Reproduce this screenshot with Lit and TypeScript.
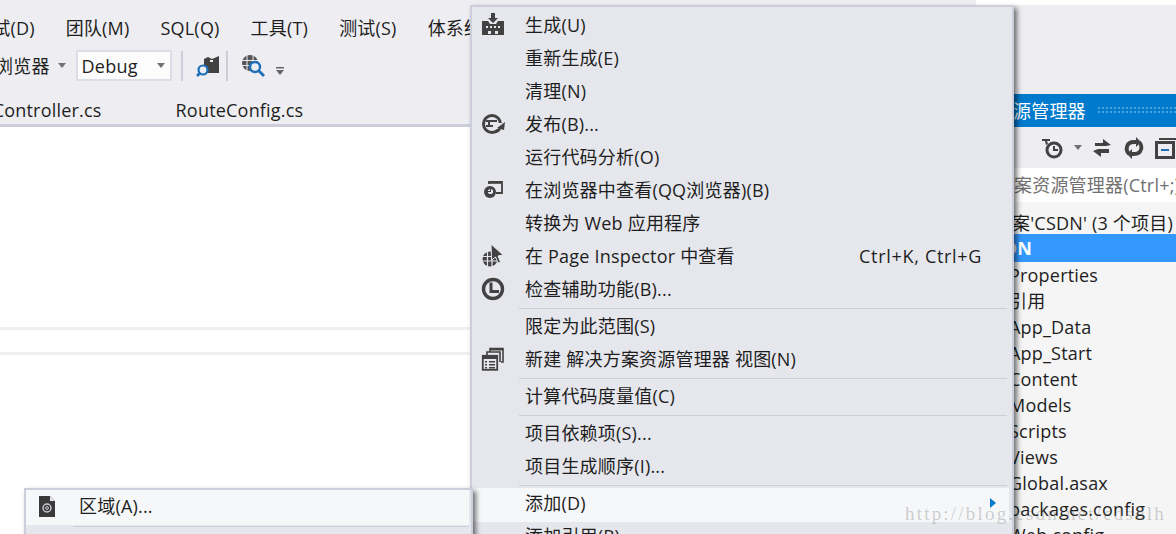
import { LitElement, html, css, svg } from "lit";
import { customElement } from "lit/decorators.js";

const G = "#424242";
const icons: Record<string, unknown> = {
  build: svg`<svg width="24" height="24" viewBox="0 0 24 24"><path fill="${G}" d="M10 0h4v5h3l-5 5-5-5h3z"/><path fill="${G}" d="M1 8h6l2 3h6l2-3h6v14H1z"/><path fill="#e6e7ed" d="M5 13h2v2H5zM9 13h2v2H9zM13 13h2v2h-2zM17 13h2v2h-2zM7 18h3v3H7zM14 18h3v3h-3z"/></svg>`,
  publish: svg`<svg width="24" height="24" viewBox="0 0 24 24"><circle cx="11" cy="12" r="8.5" fill="none" stroke="${G}" stroke-width="3"/><path fill="none" stroke="${G}" stroke-width="2" d="M5 9h11M5 14h7M8 9v5"/><path fill="#e6e7ed" d="M14 11h9v6h-9z"/><path fill="${G}" d="M24 10l-1 8-7-2z"/><path fill="none" stroke="${G}" stroke-width="2.4" d="M13 20c3 0 5-1 6-4"/></svg>`,
  browser: svg`<svg width="24" height="24" viewBox="0 0 24 24"><path fill="none" stroke="${G}" stroke-width="1.8" d="M8 6V4h13v11h-6"/><path fill="none" stroke="${G}" stroke-width="1.6" d="M8 5h12"/><circle cx="9" cy="14" r="6" fill="${G}"/><circle cx="9.5" cy="13.5" r="2.6" fill="#e6e7ed"/><path fill="${G}" d="M9 11h1v3H6v-1h3z"/></svg>`,
  inspector: svg`<svg width="24" height="24" viewBox="0 0 24 24"><circle cx="9" cy="15" r="7.5" fill="${G}"/><path fill="none" stroke="#e6e7ed" stroke-width="1.2" d="M1 12.5h15M1 17h15M6.5 7v16M11 7v16"/><path fill="${G}" stroke="#e6e7ed" stroke-width="1" d="M10 0l12 11-5 1 2.600 6-2.600 1-2.500-6-4 3z"/></svg>`,
  access: svg`<svg width="24" height="24" viewBox="0 0 24 24"><circle cx="12" cy="12" r="9.500" fill="none" stroke="${G}" stroke-width="3.400"/><path fill="none" stroke="${G}" stroke-width="3" d="M10 5.500v9h8"/></svg>`,
  newview: svg`<svg width="24" height="24" viewBox="0 0 24 24"><path fill="none" stroke="${G}" stroke-width="1.6" d="M9 5V1.5h13V15h-2"/><path fill="${G}" d="M9 1h13v2.500H9z"/><path fill="none" stroke="${G}" stroke-width="1.600" d="M6 8V5h13v10"/><rect x="1.800" y="8.800" width="14.400" height="14" fill="#e6e7ed" stroke="${G}" stroke-width="1.800"/><path fill="${G}" d="M2 9h14v3H2zM4 14h2v1.500H4zM8 14h6v1.500H8zM4 17h2v1.500H4zM8 17h6v1.500H8zM4 20h2v1.500H4zM8 20h6v1.500H8z"/></svg>`,
  area: svg`<svg width="20" height="24" viewBox="0 0 20 24"><path fill="#3a3a3a" d="M2 2h11l5 5v16H2z"/><path fill="#e6e7ed" d="M13 2l5 5h-5z"/><circle cx="10" cy="14" r="4" fill="none" stroke="#c9cbd2" stroke-width="1.400"/><circle cx="10" cy="14" r="1.400" fill="none" stroke="#c9cbd2" stroke-width="1"/></svg>`,
};

const rows: Array<[string, string?, string?]> = [
  ["生成(U)", "build"],
  ["重新生成(E)"],
  ["清理(N)"],
  ["发布(B)...", "publish"],
  ["运行代码分析(O)"],
  ["在浏览器中查看(QQ浏览器)(B)", "browser"],
  ["转换为 Web 应用程序"],
  ["在 Page Inspector 中查看", "inspector", "Ctrl+K, Ctrl+G"],
  ["检查辅助功能(B)...", "access"],
  ["-"],
  ["限定为此范围(S)"],
  ["新建 解决方案资源管理器 视图(N)", "newview"],
  ["-"],
  ["计算代码度量值(C)"],
  ["-"],
  ["项目依赖项(S)..."],
  ["项目生成顺序(I)..."],
  ["-"],
  ["添加(D)", undefined, ">"],
  ["添加引用(R)..."],
];

const tree = ["Properties", "引用", "App_Data", "App_Start", "Content", "Models", "Scripts", "Views", "Global.asax", "packages.config", "Web.config"];

@customElement("app-root")
export class AppRoot extends LitElement {
  static styles = css`
    :host {
      display: block;
      position: relative;
      width: 1176px;
      height: 534px;
      overflow: hidden;
      background: #eeeef2;
      color: #1e1e1e;
      font: 18px/26px "Open Sans", "Noto Sans CJK SC", sans-serif;
      letter-spacing: 0.2px;
    }
    .page { display: flex; height: 534px; }
    .main { width: 900px; flex: none; display: flex; flex-direction: column; overflow: hidden; }
    .menubar { display: flex; gap: 31px; height: 50px; flex: none; padding-top: 15px; box-sizing: border-box; margin-left: -26px; white-space: nowrap; }
    .toolbar { display: flex; align-items: center; height: 31px; flex: none; margin-left: -5px; white-space: nowrap; }
    .arrow { width: 0; height: 0; border: 4.5px solid transparent; border-top: 5px solid #717171; border-bottom: 0; }
    .arrow-a { margin-left: 8px; }
    .arrow-b { margin-left: 9px; }
    .combo { width: 96px; height: 31px; box-sizing: border-box; margin-left: 10px; border: 2px solid #dcdde6; background: #fcfcfc; display: flex; align-items: center; justify-content: space-between; padding: 0 5px 0 4px; }
    .tbsep { width: 2px; height: 30px; background: #ccced9; }
    .sep-a { margin-left: 9px; }
    .sep-b { margin-left: 6px; }
    .t-find { margin-left: 13px; }
    .t-globe { margin-left: 12px; }
    .t-over { margin: 10px 0 0 9px; }
    .tabs { display: flex; height: 46px; flex: none; box-sizing: border-box; padding: 17px 0 0 0; margin-left: -59px; gap: 74px; white-space: nowrap; border-bottom: 3px solid #cccedb; }
    .tabs span { line-height: 24px; }
    .editor { flex: 1; background: #fff; display: flex; flex-direction: column; }
    .strip { height: 3px; background: #efefef; }
    .gap-a { height: 200px; }
    .gap-b { height: 22px; }
    .panel { flex: 1; min-width: 0; display: flex; flex-direction: column; overflow: hidden; }
    .panel > * { flex: none; }
    .topwhite { height: 5px; margin-left: 76px; background: #fff; }
    .topgap { height: 89px; }
    .title { height: 33px; background: #007acc; color: #fff; display: flex; align-items: center; padding-left: 22px; white-space: nowrap; }
    .dots { width: 100px; height: 9px; margin-left: 11px; flex: none; background-image: radial-gradient(#4aa3df 0.8px, transparent 1px); background-size: 4px 4px; }
    .ptools { height: 41px; display: flex; align-items: center; white-space: nowrap; }
    .ptools .tbsep { margin-left: 125px; }
    .p-clock { margin-left: 16px; }
    .p-swap { margin-left: 9px; }
    .p-sync { margin-left: 10px; }
    .p-win { margin-left: 10px; }
    .search { height: 34px; background: #fff; color: #717171; display: flex; align-items: center; padding-left: 114px; white-space: nowrap; }
    .tree { background: #f5f5f5; white-space: nowrap; display: flex; flex-direction: column; height: 332px; }
    .sol { height: 32px; flex: none; box-sizing: border-box; padding: 8px 0 0 112px; line-height: 26px; }
    .sel { height: 28px; flex: none; background: #3399ff; color: #fff; font-weight: 700; line-height: 28px; padding-left: 82px; }
    .node { height: 26px; flex: none; line-height: 26px; padding-left: 109px; }
    .menu { position: absolute; left: 470px; top: 5px; width: 544px; height: 560px; box-sizing: border-box; border: 2px solid #cccedb; background: #e6e7ed; box-shadow: 3px 3px 5px rgba(0,0,0,.55); padding-top: 3px; }
    .row { display: grid; grid-template-columns: 53px 334px 1fr; align-items: center; height: 33px; box-sizing: border-box; padding-bottom: 3px; white-space: nowrap; margin-right: 3px; }
    .row.hot { background: #f6f7f9; height: 34px; padding-bottom: 5px; margin-left: 1px; grid-template-columns: 52px 334px 1fr; margin-bottom: -1px; }
    .key { letter-spacing: 0.7px; }
    .ico { display: flex; justify-content: flex-start; padding-left: 9px; align-items: center; height: 24px; }
    .sep { height: 4px; margin: 0 5px 0 47px; display: flex; align-items: flex-start; padding-top: 1px; box-sizing: border-box; }
    .sep::before { content: ""; display: block; width: 100%; height: 1px; background: #cccedb; }
    .tri { justify-self: end; margin-right: 13px; width: 0; height: 0; border: 5px solid transparent; border-left: 6px solid #007acc; border-right: 0; }
    .sub { position: absolute; left: 24px; top: 488px; width: 449px; height: 60px; box-sizing: border-box; border: 2px solid #cccedb; background: #e6e7ed; box-shadow: 3px 3px 5px rgba(0,0,0,.55); }
    .subrow { display: flex; align-items: center; height: 35px; box-sizing: border-box; padding-bottom: 3px; background: #f6f7f9; margin-right: 2px; }
    .subrow .ico { width: 53px; padding-left: 11px; box-sizing: border-box; flex: none; }
    .subsep { height: 1px; margin: 1px 2px 0 47px; background: #cccedb; }
    .mark { position: absolute; left: 905px; top: 501px; font: 19px/26px "Liberation Serif", serif; letter-spacing: 2.2px; color: rgba(110,110,110,.33); white-space: nowrap; pointer-events: none; }
    svg { display: block; flex: none; }
  `;

  private menuRow(r: [string, string?, string?]) {
    if (r[0] === "-") return html`<div class="sep"></div>`;
    const hot = r[2] === ">";
    return html`<div class="row ${hot ? "hot" : ""}">
      <span class="ico">${r[1] ? icons[r[1]] : ""}</span>
      <span>${r[0]}</span>
      ${hot ? html`<span class="tri"></span>` : html`<span class="key">${r[2] ?? ""}</span>`}
    </div>`;
  }

  render() {
    return html`
      <div class="page">
        <div class="main">
          <div class="menubar">
            <span>调试(D)</span><span>团队(M)</span><span>SQL(Q)</span><span>工具(T)</span><span>测试(S)</span><span>体系结构(C)</span>
          </div>
          <div class="toolbar">
            <span>浏览器</span>
            <span class="arrow arrow-a"></span>
            <span class="combo">Debug<span class="arrow"></span></span>
            <span class="tbsep sep-a"></span>
            <svg class="t-find" width="24" height="24" viewBox="0 0 24 24"><path fill="${G}" d="M8 5l4-2 4 2 7-3v17H10l-2-4z"/><path fill="#eeeef2" d="M14 6h3v2h-3z"/><circle cx="7" cy="16" r="4.500" fill="#eeeef2" stroke="#1e6fb8" stroke-width="2.200"/><path stroke="#1e6fb8" stroke-width="2.600" d="M4 19l-3 3"/></svg>
            <span class="tbsep sep-b"></span>
            <svg class="t-globe" width="26" height="26" viewBox="0 0 26 26"><circle cx="10" cy="10" r="8" fill="#555"/><path fill="none" stroke="#eeeef2" stroke-width="1" d="M2 7.500h16M2 12.500h16M7 2v16M13 2v16"/><circle cx="15" cy="14" r="5" fill="#eeeef2" stroke="#1e6fb8" stroke-width="2.400"/><path stroke="#1e6fb8" stroke-width="2.800" d="M19 18l5 5"/></svg>
            <svg class="t-over" width="10" height="8" viewBox="0 0 10 8"><path fill="#666" d="M1 0h8v1.500H1zM1 3h8L5 8z"/></svg>
          </div>
          <div class="tabs"><span>HomeController.cs</span><span>RouteConfig.cs</span></div>
          <div class="editor">
            <div class="gap-a"></div>
            <div class="strip"></div>
            <div class="gap-b"></div>
            <div class="strip"></div>
          </div>
        </div>
        <div class="panel">
          <div class="topwhite"></div>
          <div class="topgap"></div>
          <div class="title">解决方案资源管理器<span class="dots"></span></div>
          <div class="ptools">
            <span class="tbsep"></span>
            <svg class="p-clock" width="24" height="24" viewBox="0 0 24 24"><path fill="${G}" d="M1 3h8v2H6l1 3-2 1-1-4H1z"/><circle cx="13" cy="14" r="7" fill="none" stroke="${G}" stroke-width="3"/><path fill="none" stroke="${G}" stroke-width="2" d="M13 10v4h4"/></svg>
            <span class="arrow arrow-b"></span>
            <svg class="p-swap" width="22" height="22" viewBox="0 0 22 22"><path fill="${G}" d="M4 6h8V2l8 6-5 1H4zM18 12v4H10v4L2 14l5-2z"/></svg>
            <svg class="p-sync" width="22" height="22" viewBox="0 0 22 22"><path fill="none" stroke="${G}" stroke-width="3.800" d="M6 17c-4-4-3-12 5-12h2M16 5c4 4 3 12-5 12H9"/><path fill="${G}" d="M13 0l5 5-5 5zM9 12l-5 5 5 5z"/></svg>
            <svg class="p-win" width="22" height="22" viewBox="0 0 22 22"><path fill="${G}" d="M4 1h18v2H4z"/><rect x="1.500" y="5.500" width="17" height="15" fill="none" stroke="${G}" stroke-width="3"/><path fill="#1e6fb8" d="M6 12h8v2H6z"/></svg>
          </div>
          <div class="search">案资源管理器(Ctrl+;)</div>
          <div class="tree">
            <div class="sol">案'CSDN' (3 个项目)</div>
            <div class="sel">CSDN</div>
            ${tree.map((t) => html`<div class="node">${t}</div>`)}
          </div>
        </div>
      </div>
      <div class="menu">${rows.map((r) => this.menuRow(r))}</div>
      <div class="sub">
        <div class="subrow"><span class="ico">${icons.area}</span><span>区域(A)...</span></div>
        <div class="subsep"></div>
      </div>
      <div class="mark">http://blog.csdn.net/cdsdlh</div>
    `;
  }
}
